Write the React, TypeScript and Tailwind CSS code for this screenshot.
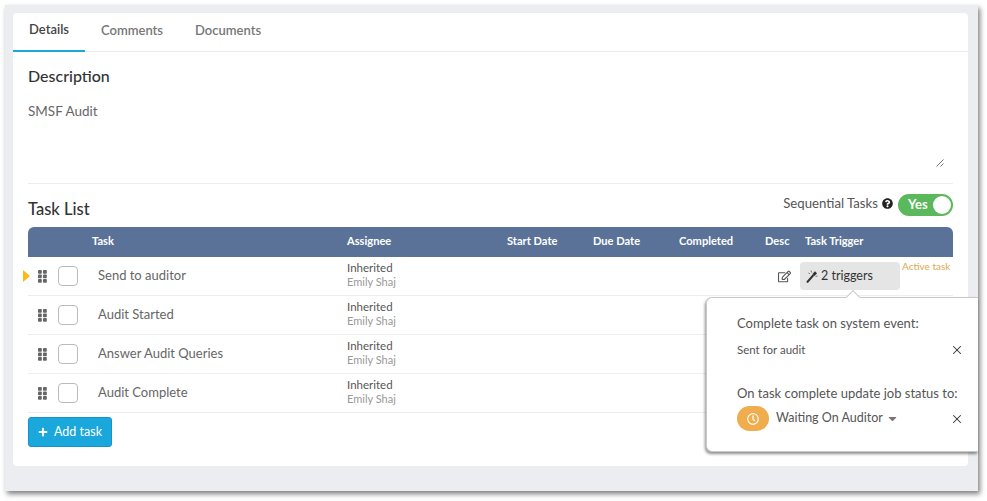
import React from 'react'
import { FaPlus, FaQuestionCircle, FaRegEdit, FaRegClock, FaCaretDown } from 'react-icons/fa'
import { X } from 'lucide-react'

const tasks = ['Send to auditor', 'Audit Started', 'Answer Audit Queries', 'Audit Complete']
const cols = 'grid grid-cols-[64px_255px_160px_86px_86px_86px_40px_1fr]'

const Grip = () => (
  <svg width="9" height="13" viewBox="0 0 9 13" className="fill-[#666]">
    {[0, 4.5, 9].map((y) => (
      <g key={y}>
        <rect x="0" y={y} width="3.8" height="3.8" rx="0.8" />
        <rect x="5" y={y} width="3.8" height="3.8" rx="0.8" />
      </g>
    ))}
  </svg>
)

const Wand = () => (
  <svg width="12" height="13" viewBox="0 0 12 13" className="shrink-0">
    <path d="M1 12.5 L7.5 5" stroke="#333333" strokeWidth="2" fill="none" />
    <path d="M7.5 5 L10 2.2" stroke="#333333" strokeWidth="2.8" fill="none" />
    <path d="M5 0.5 L5.6 2.5 M11.5 6 L9.6 6.4 M2.5 3 L4 3.8" stroke="#777777" strokeWidth="1" fill="none" />
  </svg>
)

const TaskRow: React.FC<{ name: string; active: boolean }> = ({ name, active }) => (
  <div className={`${cols} relative h-[39px] items-center border-b border-[#eeeeee]`}>
    {active && (
      <div className="absolute left-[-5px] top-[13px] h-0 w-0 border-y-[6px] border-l-[7px] border-y-transparent border-l-[#fdb813]" />
    )}
    <div className="flex items-center gap-[11px] pl-[10px]">
      <Grip />
      <div className="h-5 w-5 rounded-[4px] border border-[#bbbbbb] bg-white" />
    </div>
    <div className="pl-[6px] text-[13px] text-[#666666]">{name}</div>
    <div className="-mt-[2px] flex flex-col leading-[14px]">
      <span className="text-[11.5px] text-[#555555]">Inherited</span>
      <span className="text-[11px] text-[#999999]">Emily Shaj</span>
    </div>
    <div />
    <div />
    <div />
    <div className="flex justify-start pt-[1px]">
      {active && <FaRegEdit className="ml-[13px] text-[13px] text-[#555555]" />}
    </div>
    {active ? (
      <div className="relative flex items-center">
        <div className="ml-[-5px] mt-[-1px] flex h-7 w-[100px] items-center gap-[3px] rounded-[4px] bg-[#e5e5e5] pl-[6px] pt-[1px] text-[12.5px] text-[#333333]">
          <Wand />
          <span>2 triggers</span>
        </div>
        <span className="absolute left-[97px] top-[-4px] text-[10px] text-[#e0a84e]">Active task</span>
      </div>
    ) : (
      <div />
    )}
  </div>
)

export default function App() {
  return (
    <div className="h-[501px] w-[987px] overflow-hidden bg-white pl-[5px] pt-[5px] font-['Lato',sans-serif]">
      <div className="relative h-[486px] w-[973px] bg-[#ebedf0] pb-[25px] pl-2 pr-[10px] pt-2 shadow-[2px_3px_5px_rgba(0,0,0,0.5)]">
        <div className="h-full rounded-[4px] bg-white">
          <div className="flex h-[39px] border-b border-[#e9e9e9] text-[13px] font-semibold">
            <div className="-mb-px flex w-[72px] items-center justify-center border-b-2 border-[#1aa7dc] pb-[3px] text-[#444444]">
              Details
            </div>
            <div className="flex items-center pb-[3px] pl-4 text-[#777777]">Comments</div>
            <div className="flex items-center pb-[3px] pl-8 text-[#777777]">Documents</div>
          </div>

          <div className="px-[15px]">
            <div className="relative h-[132px] border-b border-[#eeeeee]">
              <h2 className="pt-[14px] text-[16px] font-medium leading-[20px] text-[#333333]">Description</h2>
              <p className="pt-[16px] text-[13.5px] leading-[18px] text-[#666666]">SMSF Audit</p>
              <svg width="8" height="8" viewBox="0 0 8 8" className="absolute bottom-[16px] right-[9px] stroke-[#777777]">
                <path d="M0.5 7.5 L7.5 0.5 M4.5 7.5 L7.5 4.5" fill="none" />
              </svg>
            </div>

            <div className="flex h-[43px] items-center justify-between">
              <h2 className="pt-[8px] text-[16.5px] font-medium text-[#333333]">Task List</h2>
              <div className="flex items-center gap-[4px] pb-[4px]">
                <span className="text-[13.2px] text-[#555555]">Sequential Tasks</span>
                <FaQuestionCircle className="text-[11px] text-[#222222]" />
                <div className="relative top-[1px] ml-[1px] flex h-[22px] w-[55px] items-center justify-between rounded-full bg-[#5cb85c] pl-[10px] pr-[2px]">
                  <span className="text-[13px] font-bold text-white">Yes</span>
                  <div className="h-[18px] w-[18px] rounded-full bg-white" />
                </div>
              </div>
            </div>

            <div className={`${cols} h-[30px] items-center rounded-t-[6px] bg-[#5a7297] pb-[2px] text-[11.1px] font-bold text-white`}>
              <div />
              <div>Task</div>
              <div>Assignee</div>
              <div>Start Date</div>
              <div>Due Date</div>
              <div>Completed</div>
              <div>Desc</div>
              <div>Task Trigger</div>
            </div>

            {tasks.map((t, i) => (
              <TaskRow key={t} name={t} active={i === 0} />
            ))}

            <button className="mt-[4px] flex h-[30px] w-[84px] items-center justify-center gap-[6px] rounded-[3px] border border-[#1593cb] bg-[#1aa7dc] text-[12.5px] text-white">
              <FaPlus className="text-[10px]" />
              Add task
            </button>
          </div>
        </div>

        {/* trigger popover */}
        <div className="absolute left-[701px] top-[292px] h-[155px] w-[272px] rounded-bl-[6px] rounded-tl-[6px] border border-r-0 border-[#c9c9c9] bg-white pl-[30px] pr-[14px] text-[#555555] shadow-[-1px_2px_3px_rgba(0,0,0,0.45)]">
          <div className="absolute left-[141px] top-[-6px] h-[10px] w-[10px] rotate-45 border-l border-t border-[#c9c9c9] bg-white" />
          <div className="pt-[16px] text-[13px] leading-[18px]">Complete task on system event:</div>
          <div className="flex items-center justify-between pt-[9px] text-[11.5px] leading-[18px]">
            <span>Sent for audit</span>
            <X size={14} strokeWidth={1.8} className="text-[#333333]" />
          </div>
          <div className="pt-[25px] text-[13px] leading-[18px]">On task complete update job status to:</div>
          <div className="flex items-center justify-between pt-[4px]">
            <div className="flex items-center gap-[7px]">
              <div className="flex h-[25px] w-8 items-center justify-center rounded-full bg-[#f0ad4e]">
                <FaRegClock className="text-[12px] text-white" />
              </div>
              <span className="text-[12.5px] text-[#555555]">Waiting On Auditor</span>
              <FaCaretDown className="-ml-[4px] text-[13px] text-[#777777]" />
            </div>
            <X size={14} strokeWidth={1.8} className="text-[#333333]" />
          </div>
        </div>
      </div>
    </div>
  )
}
